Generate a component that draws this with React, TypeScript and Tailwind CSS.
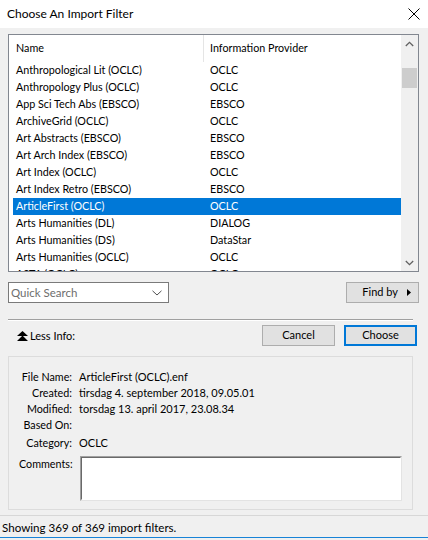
import React from "react";

const rows: [string, string][] = [
  ["Anthropological Lit (OCLC)", "OCLC"],
  ["Anthropology Plus (OCLC)", "OCLC"],
  ["App Sci Tech Abs (EBSCO)", "EBSCO"],
  ["ArchiveGrid (OCLC)", "OCLC"],
  ["Art Abstracts (EBSCO)", "EBSCO"],
  ["Art Arch Index (EBSCO)", "EBSCO"],
  ["Art Index (OCLC)", "OCLC"],
  ["Art Index Retro (EBSCO)", "EBSCO"],
  ["ArticleFirst (OCLC)", "OCLC"],
  ["Arts Humanities (DL)", "DIALOG"],
  ["Arts Humanities (DS)", "DataStar"],
  ["Arts Humanities (OCLC)", "OCLC"],
  ["ASTA (OCLC)", "OCLC"],
];

const details: [string, string][] = [
  ["File Name:", "ArticleFirst (OCLC).enf"],
  ["Created:", "tirsdag 4. september 2018, 09.05.01"],
  ["Modified:", "torsdag 13. april 2017, 23.08.34"],
  ["Based On:", ""],
];

export default function App() {
  return (
    <div className="w-[428px] h-[540px] bg-[#f0f0f0] text-[10.75px] text-black flex flex-col overflow-hidden font-['Lato','Noto_Sans',sans-serif]">
      {/* title bar */}
      <div className="h-[28px] bg-white flex items-center justify-between pl-[7px] pr-[7px] shrink-0">
        <span className="text-[12px] leading-none">Choose An Import Filter</span>
        <svg width="12" height="12" viewBox="0 0 12 12" className="mr-[1px]">
          <path d="M0.5 0.5 L11.5 11.5 M11.5 0.5 L0.5 11.5" stroke="#000" strokeWidth="1" />
        </svg>
      </div>

      {/* list */}
      <div className="mt-[6px] ml-[8px] w-[411px] h-[238px] border border-[#828790] bg-white flex shrink-0 overflow-hidden">
        <div className="flex-1 flex flex-col overflow-hidden">
          <div className="h-[27px] flex items-center shrink-0">
            <div className="w-[195px] pl-[7px] h-full flex items-center border-r border-[#e5e5e5]">Name</div>
            <div className="pl-[6px]">Information Provider</div>
          </div>
          {rows.map(([n, p], i) => (
            <div
              key={n}
              className={
                "h-[17px] shrink-0 flex items-center ml-[4px] " +
                (i === 8 ? "bg-[#0078d7] text-white" : "")
              }
            >
              <div className="w-[191px] pl-[3px] whitespace-nowrap">{n}</div>
              <div className="pl-[6px] whitespace-nowrap">{p}</div>
            </div>
          ))}
        </div>
        {/* scrollbar */}
        <div className="w-[17px] bg-[#f0f0f0] flex flex-col shrink-0">
          <div className="h-[18px] flex items-center justify-center shrink-0">
            <svg width="9" height="6" viewBox="0 0 9 6">
              <path d="M0.8 5 L4.5 1.3 L8.2 5" stroke="#606060" strokeWidth="1.3" fill="none" />
            </svg>
          </div>
          <div className="flex-1 flex flex-col">
            <div className="h-[15px]" />
            <div className="h-[20px] mx-[1px] bg-[#cdcdcd]" />
            <div className="flex-1" />
          </div>
          <div className="h-[17px] flex items-center justify-center shrink-0">
            <svg width="9" height="6" viewBox="0 0 9 6">
              <path d="M0.8 1 L4.5 4.7 L8.2 1" stroke="#606060" strokeWidth="1.3" fill="none" />
            </svg>
          </div>
        </div>
      </div>

      {/* quick search row */}
      <div className="mt-[10px] flex justify-between pl-[8px] pr-[9px] shrink-0">
        <div className="w-[161px] h-[21px] bg-white border border-[#7a7a7a] flex items-center justify-between pl-[2px] pr-[6px]">
          <span className="text-[#6d6d6d] text-[11.5px]">Quick Search</span>
          <svg width="10" height="6" viewBox="0 0 10 6">
            <path d="M0.5 0.8 L5 5 L9.5 0.8" stroke="#505050" strokeWidth="1" fill="none" />
          </svg>
        </div>
        <div className="w-[73px] h-[21px] bg-[#e1e1e1] border border-[#adadad] flex items-center justify-end pr-[7px] gap-[9px] text-[11px]">
          <span>Find by</span>
          <svg width="4" height="7" viewBox="0 0 4 7">
            <path d="M0 0 L4 3.5 L0 7 Z" fill="#000" />
          </svg>
        </div>
      </div>

      {/* separator */}
      <div className="mt-[16px] ml-[8px] w-[405px] h-0 border-t border-[#a0a0a0] border-b border-b-white shrink-0" />

      {/* buttons row */}
      <div className="mt-[4px] flex items-center pl-[17px] pr-[11px] shrink-0 text-[11px]">
        <div className="flex items-center gap-[2px] flex-1 pt-[2px]">
          <svg width="11" height="11" viewBox="0 0 11 11">
            <path d="M5.5 0 L11 5 L0 5 Z M5.5 4.5 L11 10 L0 10 Z" fill="#000" />
          </svg>
          <span>Less Info:</span>
        </div>
        <div className="w-[73px] h-[21px] bg-[#e1e1e1] border border-[#adadad] flex items-center justify-center">
          Cancel
        </div>
        <div className="ml-[9px] w-[73px] h-[21px] bg-[#e1e1e1] border-2 border-[#0078d7] flex items-center justify-center">
          Choose
        </div>
      </div>

      {/* details */}
      <div className="mt-[10px] ml-[8px] w-[405px] h-[154px] border border-[#dcdcdc] shrink-0 pt-[12px] pl-[10px] text-[11px]">
        <div className="grid grid-cols-[53px_1fr] gap-x-[7px]">
          {details.map(([l, v]) => (
            <React.Fragment key={l}>
              <div className="text-right h-[16px] leading-[16px] whitespace-nowrap text-[10.75px]">{l}</div>
              <div className="h-[16px] leading-[16px] whitespace-nowrap">{v}</div>
            </React.Fragment>
          ))}
          <div className="text-right h-[17px] leading-[17px] mt-[1px] text-[10.75px]">Category:</div>
          <div className="h-[17px] leading-[17px] mt-[1px]">OCLC</div>
        </div>
        <div className="flex mt-[5px]">
          <div className="w-[53px] text-right whitespace-nowrap text-[10.75px]">Comments:</div>
          <div className="ml-[8px] w-[322px] h-[45px] bg-white border border-t-[#a0a0a0] border-l-[#a0a0a0] border-r-[#e3e3e3] border-b-[#e3e3e3]">
            <div className="w-full h-full border border-t-[#696969] border-l-[#696969] border-r-white border-b-white" />
          </div>
        </div>
      </div>

      {/* status bar */}
      <div className="mt-[5px] flex-1 border-t border-[#d7d7d7] flex flex-col">
        <div className="flex-1 flex items-center pl-[2px] pt-[2px] text-[11.6px]">Showing 369 of 369 import filters.</div>
        <div className="h-[1px] bg-[#1883d7]" />
        <div className="h-[2px]" />
      </div>
    </div>
  );
}
